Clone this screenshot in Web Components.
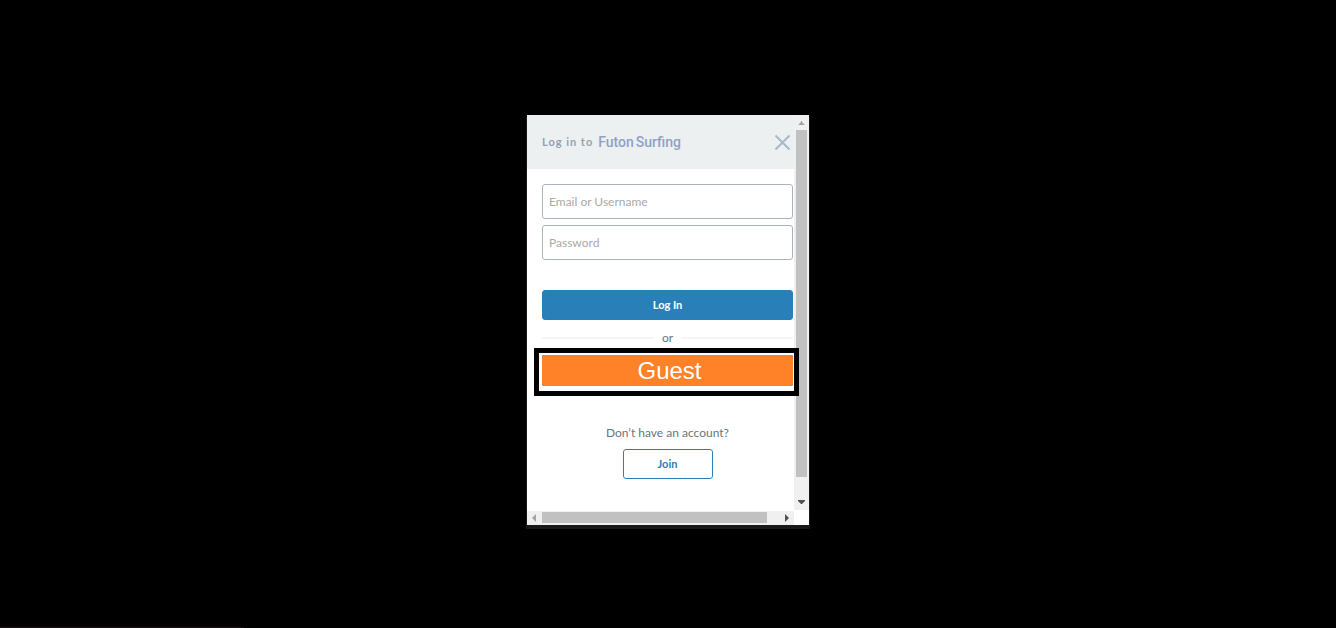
<!DOCTYPE html>
<html lang="en">
<head>
<meta charset="utf-8">
<title>Log in to FutonSurfing</title>
<style>
html,body{margin:0;background:#000}
body{font-family:Lato,"Liberation Sans",sans-serif;font-size:12px;line-height:18px;color:#68757c}
</style>
</head>
<body>
<login-page></login-page>
<script>
const define = (name, html, setup) => customElements.define(name, class extends HTMLElement {
  constructor() {
    super();
    this.attachShadow({mode: 'open'}).innerHTML = '<style>:host,*{box-sizing:border-box}</style>' + html;
    if (setup) setup(this, this.shadowRoot);
  }
});

define('text-field', `
<style>
:host{display:block}
input{display:block;width:100%;height:35px;padding:0 6px;border:1px solid #aab2ba;border-radius:3px;background:#fff;font:inherit;color:#444;outline:0}
input::placeholder{color:#a9a9a9;opacity:1}
</style>
<input>`, (host, root) => {
  const input = root.querySelector('input');
  input.type = host.getAttribute('type') || 'text';
  input.placeholder = host.getAttribute('label');
  input.setAttribute('aria-label', host.getAttribute('label'));
});

define('action-button', `
<style>
:host{display:block}
button{display:block;width:100%;height:30px;padding:0;border:1px solid #2980b9;border-radius:3px;background:#2980b9;color:#fff;font:bold 11px/18px Lato,sans-serif}
:host([kind=outline]) button{background:#fff;color:#2980b9}
:host([kind=guest]) button{height:31px;padding-left:4px;border:0;background:#ff8128;font:24px/31px "Liberation Sans",Arial,sans-serif}
</style>
<button type="button"><slot></slot></button>`);

define('focus-frame', `
<style>
:host{display:block;position:relative;z-index:2}
.frame{position:absolute;inset:-7px -6px -10px -8px;border:5px solid #000;background:#fff}
.body{position:relative;background:#3a5795;border-radius:2px}
</style>
<div class="frame"></div><div class="body"><slot></slot></div>`);

define('or-divider', `
<style>
:host{display:flex;align-items:center;gap:8px}
i{flex:1;height:2px;background:#f4f5f6}
</style>
<i></i><span><slot></slot></span><i></i>`);

define('modal-header', `
<style>
:host{display:flex;align-items:center;height:54px;padding:0 3px 0 15px;background:#ecf0f1}
h1{display:flex;align-items:center;gap:5px;flex:1;margin:0;font-size:11px;font-weight:bold;color:#95a1b3;letter-spacing:1px}
b{display:flex;gap:2px;font:500 14px/18px Roboto,sans-serif;letter-spacing:normal;color:#949fc5}
button{display:block;padding:0;border:0;background:none}
svg{display:block}
</style>
<h1><slot></slot> <b><slot name="brand"></slot></b></h1>
<button type="button" aria-label="Close"><svg width="17" height="17" viewBox="0 0 17 17" fill="none" stroke="#a9b8ca" stroke-width="2"><path d="M1.5 1.5 15.5 15.5M15.5 1.5 1.5 15.5"/></svg></button>`);

define('scroll-track', `
<style>
:host{display:flex;flex-direction:column;background:#f0f0f0}
svg{display:block;flex:none;width:15px;height:15px;fill:#a3a3a3}
svg.on{fill:#505050}
.run{flex:1;display:flex;flex-direction:column;padding:0 2px}
.thumb{flex:0 0 95%;background:#c1c1c1}
:host([axis=x]){flex-direction:row}
:host([axis=x]) .run{flex-direction:row;padding:1px 0 2px}
:host([axis=x]) .v,:host(:not([axis=x])) .h{display:none}
</style>
<svg class="v"><path d="M4 10 7 7V6h1v1l3 3z"/></svg><svg class="h"><path d="M9 3v8L5 7z"/></svg>
<div class="run"><div class="thumb"></div></div>
<svg class="v on"><path d="M4 5h7v1L8 9H7L4 6z"/></svg><svg class="h on"><path d="M6 3v8l4-4z"/></svg>`);

define('modal-window', `
<style>
:host{display:grid;grid-template-columns:1fr 15px;grid-template-rows:1fr 14px;width:282px;max-width:100%;background:#fff;box-shadow:0 3px 0 1px #191919}
scroll-track{min-height:0}
.side{margin-bottom:1px}
</style>
<main><slot></slot></main><scroll-track class="side"></scroll-track><scroll-track axis="x"></scroll-track>`);

define('login-page', `
<style>
:host{display:flex;justify-content:center;align-items:center;min-height:100vh;padding-top:12px;background:linear-gradient(#171012,#171012) left bottom/244px 1px no-repeat #000}
form{display:flex;flex-direction:column;padding:15px 1px 32px 15px}
text-field + text-field{margin-top:6px}
.login{margin-top:30px}
or-divider{margin:9px 0 8px}
p{margin:38px 0 7px;text-align:center}
.join{width:90px;align-self:center}
</style>
<modal-window>
<modal-header>Log in to<span slot="brand">Futon</span><span slot="brand">Surfing</span></modal-header>
<form>
<text-field label="Email or Username"></text-field>
<text-field label="Password" type="password"></text-field>
<action-button class="login">Log In</action-button>
<or-divider>or</or-divider>
<focus-frame><action-button kind="guest">Guest</action-button></focus-frame>
<p>Don’t have an account?</p>
<action-button kind="outline" class="join">Join</action-button>
</form>
</modal-window>`);
</script>
</body>
</html>
